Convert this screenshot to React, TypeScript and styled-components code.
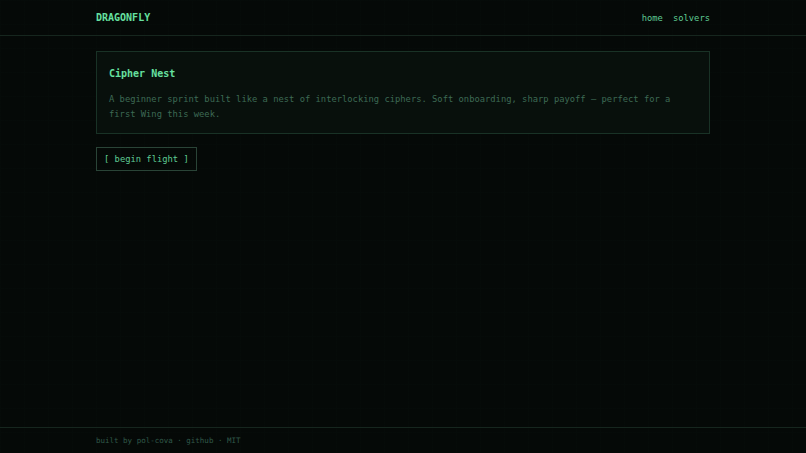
import styled, { createGlobalStyle } from "styled-components";

const GlobalStyle = createGlobalStyle`
  html, body {
    margin: 0;
    padding: 0;
    background: #050907;
  }
  * {
    box-sizing: border-box;
  }
`;

const Page = styled.div`
  min-height: 100vh;
  display: flex;
  flex-direction: column;
  font-family: "DejaVu Sans Mono", "Liberation Mono", monospace;
  background-color: #050907;
  background-image: linear-gradient(rgba(60, 120, 90, 0.015) 1px, transparent 1px),
    linear-gradient(90deg, rgba(60, 120, 90, 0.015) 1px, transparent 1px);
  background-size: 24px 24px;
`;

const Header = styled.header`
  height: 36px;
  border-bottom: 1px solid #16261e;
`;

const Inner = styled.div`
  width: 614px;
  margin: 0 auto;
`;

const HeaderInner = styled(Inner)`
  height: 35px;
  display: flex;
  align-items: center;
  justify-content: space-between;
`;

const Logo = styled.div`
  font-size: 10px;
  font-weight: bold;
  color: #66e0a0;
`;

const Nav = styled.nav`
  display: flex;
  gap: 10px;
`;

const NavLink = styled.a`
  font-size: 8.8px;
  color: #5fcb94;
  text-decoration: none;
`;

const Main = styled.main`
  flex: 1;
  padding-top: 15px;
`;

const Card = styled.section`
  border: 1px solid #193226;
  background: #08100c;
  padding: 13px 12px 12px;
`;

const Title = styled.h1`
  margin: 0;
  font-size: 10px;
  line-height: 18px;
  font-weight: bold;
  color: #66e0a0;
`;

const Blurb = styled.p`
  margin: 9px 0 0;
  font-size: 8.8px;
  line-height: 14.5px;
  color: #3d6a54;
`;

const Button = styled.button`
  margin-top: 13px;
  font-family: inherit;
  font-size: 8.8px;
  line-height: 12px;
  padding: 5px 7px;
  color: #5fcb94;
  background: transparent;
  border: 1px solid #2a4437;
  cursor: pointer;
`;

const Footer = styled.footer`
  border-top: 1px solid #16261e;
  height: 26px;
`;

const FooterInner = styled(Inner)`
  height: 25px;
  display: flex;
  align-items: center;
  font-size: 7.5px;
  color: #31594a;
`;

export default function App() {
  return (
    <>
      <GlobalStyle />
      <Page>
        <Header>
          <HeaderInner>
            <Logo>DRAGONFLY</Logo>
            <Nav>
              <NavLink href="#">home</NavLink>
              <NavLink href="#">solvers</NavLink>
            </Nav>
          </HeaderInner>
        </Header>
        <Main>
          <Inner>
            <Card>
              <Title>Cipher Nest</Title>
              <Blurb>
                A beginner sprint built like a nest of interlocking ciphers.
                Soft onboarding, sharp payoff — perfect for a first Wing this
                week.
              </Blurb>
            </Card>
            <Button>[ begin flight ]</Button>
          </Inner>
        </Main>
        <Footer>
          <FooterInner>built by pol-cova · github · MIT</FooterInner>
        </Footer>
      </Page>
    </>
  );
}
